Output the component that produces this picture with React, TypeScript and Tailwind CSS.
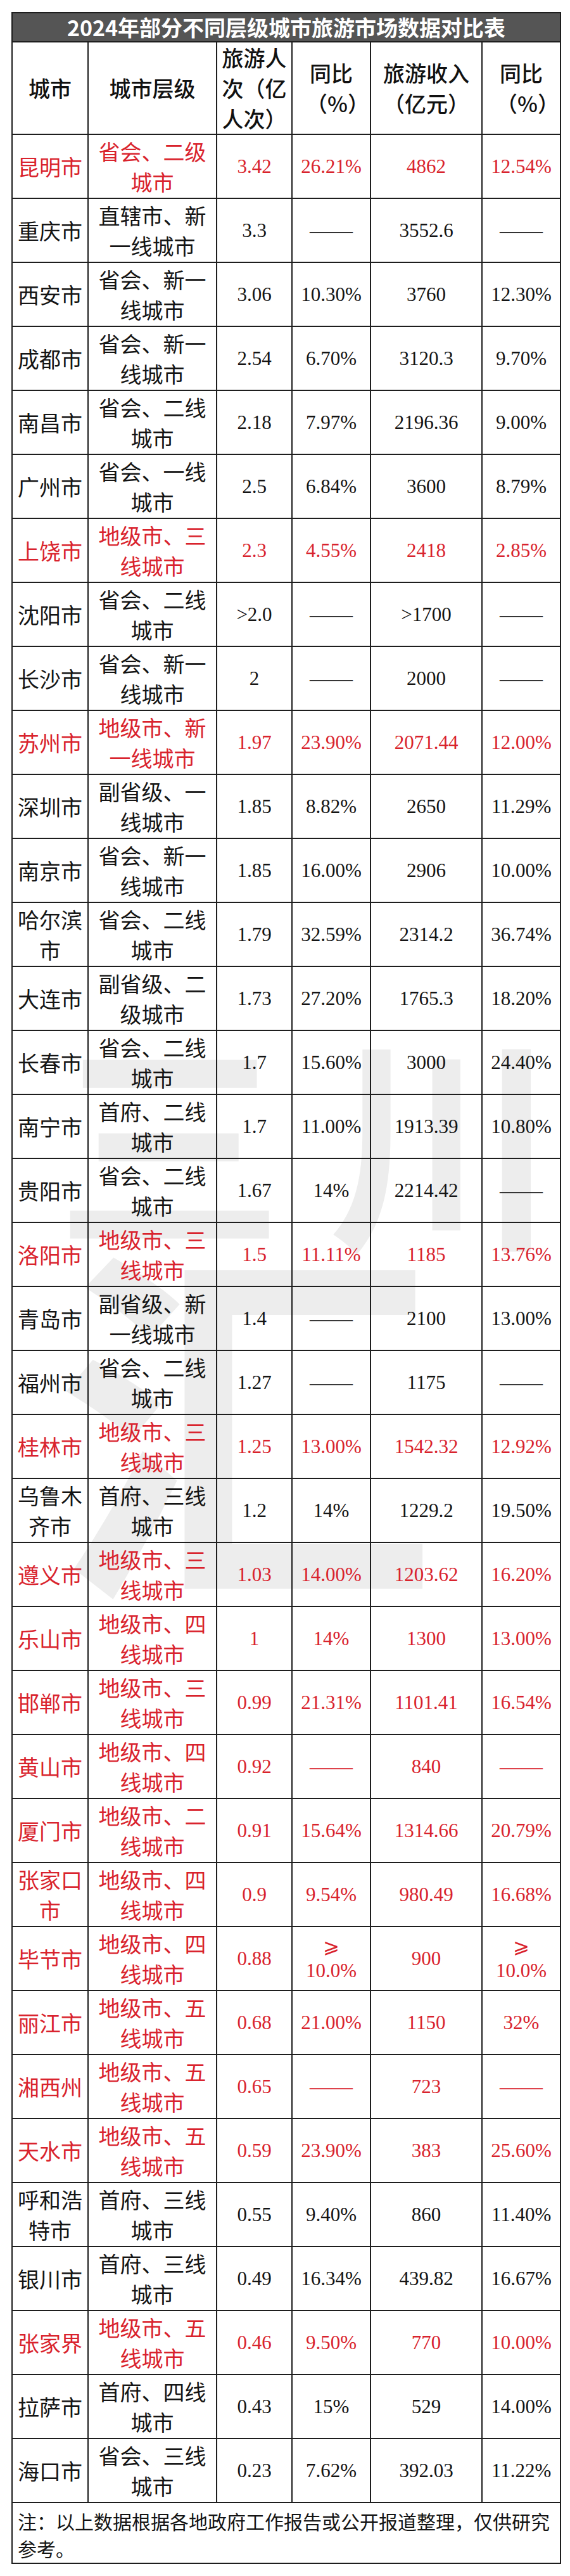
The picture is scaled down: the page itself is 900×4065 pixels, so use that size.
import React from "react";

type Row = [string, string, string, string, string, string, boolean];

const rows: Row[] = [
  ["昆明市", "省会、二级城市", "3.42", "26.21%", "4862", "12.54%", true],
  ["重庆市", "直辖市、新一线城市", "3.3", "——", "3552.6", "——", false],
  ["西安市", "省会、新一线城市", "3.06", "10.30%", "3760", "12.30%", false],
  ["成都市", "省会、新一线城市", "2.54", "6.70%", "3120.3", "9.70%", false],
  ["南昌市", "省会、二线城市", "2.18", "7.97%", "2196.36", "9.00%", false],
  ["广州市", "省会、一线城市", "2.5", "6.84%", "3600", "8.79%", false],
  ["上饶市", "地级市、三线城市", "2.3", "4.55%", "2418", "2.85%", true],
  ["沈阳市", "省会、二线城市", ">2.0", "——", ">1700", "——", false],
  ["长沙市", "省会、新一线城市", "2", "——", "2000", "——", false],
  ["苏州市", "地级市、新一线城市", "1.97", "23.90%", "2071.44", "12.00%", true],
  ["深圳市", "副省级、一线城市", "1.85", "8.82%", "2650", "11.29%", false],
  ["南京市", "省会、新一线城市", "1.85", "16.00%", "2906", "10.00%", false],
  ["哈尔滨市", "省会、二线城市", "1.79", "32.59%", "2314.2", "36.74%", false],
  ["大连市", "副省级、二级城市", "1.73", "27.20%", "1765.3", "18.20%", false],
  ["长春市", "省会、二线城市", "1.7", "15.60%", "3000", "24.40%", false],
  ["南宁市", "首府、二线城市", "1.7", "11.00%", "1913.39", "10.80%", false],
  ["贵阳市", "省会、二线城市", "1.67", "14%", "2214.42", "——", false],
  ["洛阳市", "地级市、三线城市", "1.5", "11.11%", "1185", "13.76%", true],
  ["青岛市", "副省级、新一线城市", "1.4", "——", "2100", "13.00%", false],
  ["福州市", "省会、二线城市", "1.27", "——", "1175", "——", false],
  ["桂林市", "地级市、三线城市", "1.25", "13.00%", "1542.32", "12.92%", true],
  ["乌鲁木齐市", "首府、三线城市", "1.2", "14%", "1229.2", "19.50%", false],
  ["遵义市", "地级市、三线城市", "1.03", "14.00%", "1203.62", "16.20%", true],
  ["乐山市", "地级市、四线城市", "1", "14%", "1300", "13.00%", true],
  ["邯郸市", "地级市、三线城市", "0.99", "21.31%", "1101.41", "16.54%", true],
  ["黄山市", "地级市、四线城市", "0.92", "——", "840", "——", true],
  ["厦门市", "地级市、二线城市", "0.91", "15.64%", "1314.66", "20.79%", true],
  ["张家口市", "地级市、四线城市", "0.9", "9.54%", "980.49", "16.68%", true],
  ["毕节市", "地级市、四线城市", "0.88", "⩾10.0%", "900", "⩾10.0%", true],
  ["丽江市", "地级市、五线城市", "0.68", "21.00%", "1150", "32%", true],
  ["湘西州", "地级市、五线城市", "0.65", "——", "723", "——", true],
  ["天水市", "地级市、五线城市", "0.59", "23.90%", "383", "25.60%", true],
  ["呼和浩特市", "首府、三线城市", "0.55", "9.40%", "860", "11.40%", false],
  ["银川市", "首府、三线城市", "0.49", "16.34%", "439.82", "16.67%", false],
  ["张家界", "地级市、五线城市", "0.46", "9.50%", "770", "10.00%", true],
  ["拉萨市", "首府、四线城市", "0.43", "15%", "529", "14.00%", false],
  ["海口市", "省会、三线城市", "0.23", "7.62%", "392.03", "11.22%", false],
];

const cell =
  "border-r-2 border-b-2 border-[#1e1e1e] flex items-center justify-center text-center";

function NumCell({ v, red }: { v: string; red: boolean }) {
  const color = red ? "text-[#d9232d]" : "text-[#141414]";
  if (v.startsWith("⩾")) {
    return (
      <div className={`${cell} h-[101px] ${color} flex-col font-['Liberation_Serif','Noto_Sans_CJK_SC',serif] text-[31px] leading-[38px]`}>
        <span>⩾</span>
        <span>{v.slice(1)}</span>
      </div>
    );
  }
  return (
    <div className={`${cell} h-[101px] ${color} font-['Liberation_Serif','Noto_Sans_CJK_SC',serif] text-[31px] leading-[48px]`}>
      {v === "——" ? <span className="text-[34px]">——</span> : v}
    </div>
  );
}

export default function App() {
  return (
    <div className="bg-white min-h-[4065px] pt-[19px] pl-[18px] overflow-hidden">
      <div className="relative isolate w-[868px]">
        {/* watermark */}
        <div
          aria-hidden="true"
          className="absolute -z-10 left-[70px] top-[1588px] flex gap-[70px] text-[#ededed] font-['Noto_Sans_CJK_SC',sans-serif] font-bold text-[360px] leading-none select-none pointer-events-none"
        >
          <span>三</span>
          <span>川</span>
        </div>
        <div
          aria-hidden="true"
          className="absolute -z-10 left-[70px] top-[1900px] text-[#ededed] font-['Noto_Sans_CJK_SC',sans-serif] font-bold text-[600px] leading-none select-none pointer-events-none"
        >
          汇
        </div>

        {/* title */}
        <div className="h-[48px] border-2 border-[#1e1e1e] bg-[#555555] flex items-center justify-center text-white font-['Noto_Sans_CJK_SC',sans-serif] font-bold text-[34px] leading-none">
          2024年部分不同层级城市旅游市场数据对比表
        </div>

        <div className="grid grid-cols-[120px_203px_119px_124px_176px_124px] border-l-2 border-[#1e1e1e] font-['Noto_Sans_CJK_SC',sans-serif] text-[#141414]">
          {["城市", "城市层级", "旅游人次（亿人次）", "同比（%）", "旅游收入（亿元）", "同比（%）"].map((h, i) => (
            <div key={i} className={`${cell} h-[146px] px-[1px] font-medium text-[34px] leading-[48px] text-[#111]`}>
              <span className={i === 3 || i === 5 ? "block w-[80px]" : i === 4 ? "block w-[140px]" : ""}>{h}</span>
            </div>
          ))}
          {rows.map((r, idx) => {
            const color = r[6] ? "text-[#d9232d]" : "text-[#141414]";
            return (
              <React.Fragment key={idx}>
                <div className={`${cell} h-[101px] ${color} text-[34px] leading-[48px]`}>{r[0]}</div>
                <div className={`${cell} h-[101px] ${color} px-[1px] text-[34px] leading-[48px]`}>{r[1]}</div>
                <NumCell v={r[2]} red={r[6]} />
                <NumCell v={r[3]} red={r[6]} />
                <NumCell v={r[4]} red={r[6]} />
                <NumCell v={r[5]} red={r[6]} />
              </React.Fragment>
            );
          })}
        </div>

        <div className="h-[96px] border-l-2 border-r-2 border-b-2 border-[#1e1e1e] pl-[8px] pt-[7px] font-['Noto_Sans_CJK_SC',sans-serif] text-[30px] leading-[43px] text-[#141414]">
          注：以上数据根据各地政府工作报告或公开报道整理，仅供研究参考。
        </div>
      </div>
    </div>
  );
}
